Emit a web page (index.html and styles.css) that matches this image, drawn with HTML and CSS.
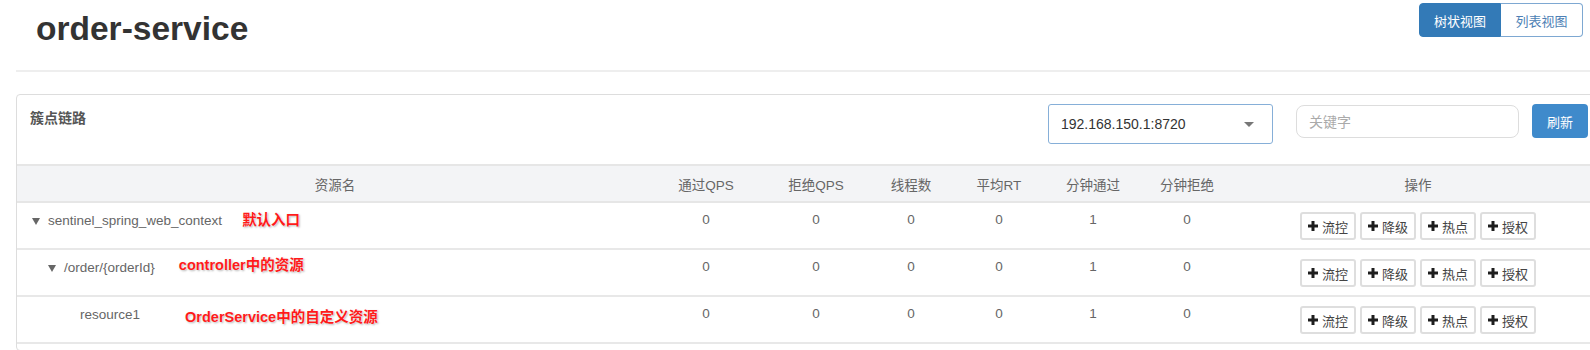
FILE: index.html
```html
<!DOCTYPE html>
<html lang="zh-CN">
<head>
    <meta charset="UTF-8">
    <title>order-service</title>
    <link rel="stylesheet" href="styles.css">
</head>
<body>
    <div class="page">
        <div class="page-head">
            <h1 class="title">order-service</h1>
            <div class="view-switch">
                <button class="switch-btn active">树状视图</button>
                <button class="switch-btn">列表视图</button>
            </div>
        </div>

        <div class="panel">
            <div class="panel-heading">
                <span class="panel-title">簇点链路</span>
                <div class="toolbar">
                    <div class="machine-select">
                        <span>192.168.150.1:8720</span>
                        <span class="caret"></span>
                    </div>
                    <input class="search" type="text" placeholder="关键字">
                    <button class="btn-refresh">刷新</button>
                </div>
            </div>

            <table class="resource-table">
                <colgroup>
                    <col style="width: 636px">
                    <col style="width: 106px">
                    <col style="width: 114px">
                    <col style="width: 76px">
                    <col style="width: 100px">
                    <col style="width: 88px">
                    <col style="width: 100px">
                    <col style="width: 362px">
                </colgroup>
                <thead>
                    <tr>
                        <th>资源名</th>
                        <th>通过QPS</th>
                        <th>拒绝QPS</th>
                        <th>线程数</th>
                        <th>平均RT</th>
                        <th>分钟通过</th>
                        <th>分钟拒绝</th>
                        <th>操作</th>
                    </tr>
                </thead>
                <tbody>
                    <tr>
                        <td class="name level-0">
                            <span class="toggle"><i class="arrow"></i></span>sentinel_spring_web_context<span class="note note-1">默认入口</span>
                        </td>
                        <td>0</td><td>0</td><td>0</td><td>0</td><td>1</td><td>0</td>
                        <td class="ops">
                            <div class="op-group">
                                <button class="op-btn"><svg viewBox="0 0 10 10"><rect x="3.5" y="0" width="3" height="10"/><rect x="0" y="3.5" width="10" height="3"/></svg>流控</button>
                                <button class="op-btn"><svg viewBox="0 0 10 10"><rect x="3.5" y="0" width="3" height="10"/><rect x="0" y="3.5" width="10" height="3"/></svg>降级</button>
                                <button class="op-btn"><svg viewBox="0 0 10 10"><rect x="3.5" y="0" width="3" height="10"/><rect x="0" y="3.5" width="10" height="3"/></svg>热点</button>
                                <button class="op-btn"><svg viewBox="0 0 10 10"><rect x="3.5" y="0" width="3" height="10"/><rect x="0" y="3.5" width="10" height="3"/></svg>授权</button>
                            </div>
                        </td>
                    </tr>
                    <tr>
                        <td class="name level-1">
                            <span class="toggle"><i class="arrow"></i></span>/order/{orderId}<span class="note note-2">controller中的资源</span>
                        </td>
                        <td>0</td><td>0</td><td>0</td><td>0</td><td>1</td><td>0</td>
                        <td class="ops">
                            <div class="op-group">
                                <button class="op-btn"><svg viewBox="0 0 10 10"><rect x="3.5" y="0" width="3" height="10"/><rect x="0" y="3.5" width="10" height="3"/></svg>流控</button>
                                <button class="op-btn"><svg viewBox="0 0 10 10"><rect x="3.5" y="0" width="3" height="10"/><rect x="0" y="3.5" width="10" height="3"/></svg>降级</button>
                                <button class="op-btn"><svg viewBox="0 0 10 10"><rect x="3.5" y="0" width="3" height="10"/><rect x="0" y="3.5" width="10" height="3"/></svg>热点</button>
                                <button class="op-btn"><svg viewBox="0 0 10 10"><rect x="3.5" y="0" width="3" height="10"/><rect x="0" y="3.5" width="10" height="3"/></svg>授权</button>
                            </div>
                        </td>
                    </tr>
                    <tr>
                        <td class="name level-2">
                            <span class="toggle"></span>resource1<span class="note note-3">OrderService中的自定义资源</span>
                        </td>
                        <td>0</td><td>0</td><td>0</td><td>0</td><td>1</td><td>0</td>
                        <td class="ops">
                            <div class="op-group">
                                <button class="op-btn"><svg viewBox="0 0 10 10"><rect x="3.5" y="0" width="3" height="10"/><rect x="0" y="3.5" width="10" height="3"/></svg>流控</button>
                                <button class="op-btn"><svg viewBox="0 0 10 10"><rect x="3.5" y="0" width="3" height="10"/><rect x="0" y="3.5" width="10" height="3"/></svg>降级</button>
                                <button class="op-btn"><svg viewBox="0 0 10 10"><rect x="3.5" y="0" width="3" height="10"/><rect x="0" y="3.5" width="10" height="3"/></svg>热点</button>
                                <button class="op-btn"><svg viewBox="0 0 10 10"><rect x="3.5" y="0" width="3" height="10"/><rect x="0" y="3.5" width="10" height="3"/></svg>授权</button>
                            </div>
                        </td>
                    </tr>
                </tbody>
            </table>
            <div class="panel-footer"></div>
        </div>
    </div>
</body>
</html>
```

FILE: styles.css
```css
body {
    margin: 0;
    font-family: 'Liberation Sans', 'Noto Sans CJK SC', sans-serif;
    background: #fff;
    color: #333;
    overflow: hidden;
}

.page {
    width: 1590px;
    box-sizing: border-box;
    padding-left: 16px;
}

.page-head {
    display: flex;
    justify-content: space-between;
    align-items: flex-start;
    height: 70px;
    padding: 0 7px 0 20px;
    border-bottom: 2px solid #eee;
}

.title {
    margin: 10px 0 0;
    font-size: 33.5px;
    line-height: 38px;
    font-weight: bold;
    color: #333;
}

.view-switch {
    display: flex;
    margin-top: 3px;
}

.switch-btn {
    width: 82px;
    height: 34px;
    font-family: inherit;
    font-size: 13px;
    color: #4d7fb5;
    background: #fff;
    border: 1px solid #7ea8d2;
    border-left: none;
    border-radius: 0 4px 4px 0;
    padding: 0;
}

.switch-btn.active {
    color: #fff;
    background: #337ab7;
    border: 1px solid #337ab7;
    border-radius: 4px 0 0 4px;
}

.panel {
    width: 1584px;
    box-sizing: border-box;
    margin-top: 22px;
    border: 1px solid #ddd;
    border-radius: 4px;
}

.panel-heading {
    display: flex;
    align-items: flex-start;
    height: 69px;
    box-sizing: border-box;
    padding: 9px 11px 0 13px;
}

.panel-title {
    margin-top: 4px;
    font-size: 14px;
    line-height: 20px;
    font-weight: bold;
    color: #555;
}

.toolbar {
    display: flex;
    align-items: flex-start;
    margin-left: auto;
}

.machine-select {
    display: flex;
    align-items: center;
    justify-content: space-between;
    width: 225px;
    height: 40px;
    box-sizing: border-box;
    padding: 0 18px 0 12px;
    border: 1px solid #86afd8;
    border-radius: 3px;
    font-size: 14px;
    color: #333;
}

.caret {
    width: 0;
    height: 0;
    border-left: 5px solid transparent;
    border-right: 5px solid transparent;
    border-top: 5px solid #777;
}

.search {
    width: 223px;
    height: 33px;
    box-sizing: border-box;
    margin: 1px 0 0 23px;
    padding: 0 12px;
    border: 1px solid #ddd;
    border-radius: 8px;
    font-family: inherit;
    font-size: 14px;
    outline: none;
}

.search::placeholder {
    color: #aaa;
}

.btn-refresh {
    width: 56px;
    height: 34px;
    margin-left: 13px;
    padding: 0;
    border: none;
    border-radius: 4px;
    background: #3f8acb;
    color: #fff;
    font-family: inherit;
    font-size: 13px;
}

.resource-table {
    width: 1582px;
    table-layout: fixed;
    border-collapse: collapse;
    font-size: 13.5px;
    color: #666;
}

.resource-table thead tr {
    background: #f3f4f6;
    border-top: 2px solid #e6e6e6;
    border-bottom: 2px solid #e6e6e6;
}

.resource-table th {
    height: 35px;
    padding: 0 8px;
    font-weight: normal;
    text-align: center;
    color: #666;
}

.resource-table tbody tr {
    border-bottom: 2px solid #e8e8e8;
}

.resource-table td {
    padding: 7px 8px 6px;
    line-height: 20px;
    text-align: center;
    vertical-align: top;
}

.resource-table td.name {
    text-align: left;
    padding-left: 15px;
    white-space: nowrap;
}

.level-1 .toggle {
    margin-left: 16px;
}

.level-2 .toggle {
    margin-left: 32px;
}

.toggle {
    display: inline-block;
    width: 16px;
    height: 20px;
    vertical-align: top;
    position: relative;
}

.arrow {
    position: absolute;
    left: 0;
    top: 8px;
    width: 0;
    height: 0;
    border-left: 4px solid transparent;
    border-right: 4px solid transparent;
    border-top: 7px solid #666;
}

.note {
    font-size: 14.5px;
    font-weight: bold;
    color: #ff1a1a;
    text-shadow: 0 0 2px #fff, 1px 1px 2px #aaa;
}

.note-1 {
    margin-left: 20px;
}

.note-2 {
    margin-left: 24px;
    position: relative;
    top: -2px;
}

.note-3 {
    margin-left: 45px;
    position: relative;
    top: 3px;
}

.resource-table td.ops {
    padding: 9px 8px 8px;
}

.op-group {
    display: flex;
    justify-content: center;
    gap: 4px;
}

.op-btn {
    display: flex;
    align-items: center;
    height: 28px;
    box-sizing: border-box;
    padding: 0 6px;
    border: 2px solid #dedede;
    border-radius: 3px;
    background: #fff;
    font-family: inherit;
    font-size: 13px;
    color: #444;
}

.op-btn svg {
    width: 10px;
    height: 10px;
    margin-right: 4px;
    fill: #1e1e1e;
}

.panel-footer {
    height: 6px;
}
```
